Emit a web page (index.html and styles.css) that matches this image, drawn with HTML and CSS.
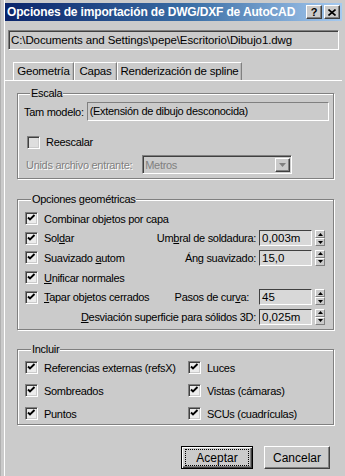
FILE: index.html
```html
<!DOCTYPE HTML>
<html>

<head>
    <meta charset="utf-8">
    <link rel="stylesheet" href="styles.css">
</head>

<body>

<div class="window">
    <div class="titlebar">
        <span class="title">Opciones de importación de DWG/DXF de AutoCAD</span>
        <span class="caption-btns">
            <span class="cbtn help">?</span>
            <span class="cbtn">
                <svg width="8" height="7" viewBox="0 0 8 7"><path d="M0.5 0.5 L7.5 6.5 M7.5 0.5 L0.5 6.5" stroke="#000" stroke-width="1.6"/></svg>
            </span>
        </span>
    </div>

    <div class="client">
        <div class="path">C:\Documents and Settings\pepe\Escritorio\Dibujo1.dwg</div>

        <div class="tabs">
            <span class="tab t1">Geometría</span>
            <span class="tab t2">Capas</span>
            <span class="tab t3">Renderización de spline</span>
        </div>

        <div class="panel">

            <fieldset class="group escala">
                <legend>Escala</legend>
                <div class="row">
                    <span class="lbl">Tam modelo:</span>
                    <span class="static">(Extensión de dibujo desconocida)</span>
                </div>
                <div class="row check-row">
                    <span class="check disabled"></span>
                    <span>Reescalar</span>
                </div>
                <div class="row units">
                    <span class="lbl grey">Unids archivo entrante:</span>
                    <span class="combo">
                        <span class="combo-text">Metros</span>
                        <span class="combo-btn">
                            <svg width="7" height="4" viewBox="0 0 7 4"><path d="M0 0 H7 L3.5 4 Z" fill="#808080"/></svg>
                        </span>
                    </span>
                </div>
            </fieldset>

            <fieldset class="group geom">
                <legend>Opciones geométricas</legend>
                <div class="row">
                    <label class="opt"><span class="check on"></span><span>Combinar objetos por capa</span></label>
                </div>
                <div class="row">
                    <label class="opt"><span class="check on"></span><span>Sol<u>d</u>ar</span></label>
                    <span class="spin-lbl">Um<u>b</u>ral de soldadura:</span>
                    <span class="field">0,003m</span>
                    <span class="spinner"><span class="up"></span><span class="dn"></span></span>
                </div>
                <div class="row">
                    <label class="opt"><span class="check on"></span><span>Suavizado <u>a</u>utom</span></label>
                    <span class="spin-lbl">Án<u>g</u> suavizado:</span>
                    <span class="field">15,0</span>
                    <span class="spinner"><span class="up"></span><span class="dn"></span></span>
                </div>
                <div class="row">
                    <label class="opt"><span class="check on"></span><span><u>U</u>nificar normales</span></label>
                </div>
                <div class="row">
                    <label class="opt"><span class="check on"></span><span><u>T</u>apar objetos cerrados</span></label>
                    <span class="spin-lbl pasos">Pasos de cur<u>v</u>a:</span>
                    <span class="field">45</span>
                    <span class="spinner"><span class="up"></span><span class="dn"></span></span>
                </div>
                <div class="row right">
                    <span class="spin-lbl"><u>D</u>esviación superficie para sólidos 3D:</span>
                    <span class="field">0,025m</span>
                    <span class="spinner"><span class="up"></span><span class="dn"></span></span>
                </div>
            </fieldset>

            <fieldset class="group incluir">
                <legend>Incluir</legend>
                <div class="cols">
                    <label class="opt"><span class="check on"></span><span>Referencias externas (refsX)</span></label>
                    <label class="opt"><span class="check on"></span><span>Luces</span></label>
                    <label class="opt"><span class="check on"></span><span>Sombreados</span></label>
                    <label class="opt"><span class="check on"></span><span>Vistas (cámaras)</span></label>
                    <label class="opt"><span class="check on"></span><span>Puntos</span></label>
                    <label class="opt"><span class="check on"></span><span>SCUs (cuadrículas)</span></label>
                </div>
            </fieldset>

        </div>

        <div class="buttons">
            <span class="btn default"><span class="focus">Aceptar</span></span>
            <span class="btn">Cancelar</span>
        </div>
    </div>
</div>

</body>

</html>
```

FILE: styles.css
```css
/* ventana clásica de windows */

html, body {
    margin: 0;
    padding: 0;
    background: #cbcbcb;
}

body {
    font-family: "Liberation Sans", Arial, sans-serif;
    font-size: 11px;
    letter-spacing: -0.3px;
    color: #000;
}

.window {
    width: 345px;
    height: 476px;
    box-sizing: border-box;
    padding: 3px 3px 0 4px;
    background: #cbcbcb;
    border-left: 1px solid #b0b0b0;
    box-shadow: inset 3px 0 0 #cbcbcb, inset 4px 0 0 #fff;
}

.titlebar {
    height: 18px;
    display: flex;
    align-items: center;
    justify-content: space-between;
    padding: 0 2px 0 2px;
    background: linear-gradient(to right, #0a246a, #3a6ea5 55%, #a6caf0);
}

.title {
    color: #fff;
    font-weight: bold;
    font-size: 12px;
    letter-spacing: -0.15px;
}

.caption-btns {
    display: flex;
    gap: 2px;
}

.cbtn {
    width: 16px;
    height: 14px;
    box-sizing: border-box;
    display: flex;
    align-items: center;
    justify-content: center;
    background: #cbcbcb;
    border: 1px solid;
    border-color: #fff #404040 #404040 #fff;
    box-shadow: inset -1px -1px 0 #808080;
    font-weight: bold;
    font-size: 11px;
    line-height: 12px;
    letter-spacing: 0;
}

.client {
    padding: 9px 0 0 0;
}

.path {
    height: 20px;
    box-sizing: border-box;
    margin: 0 3px 0 3px;
    padding: 0 2px;
    border: 1px solid;
    border-color: #808080 #fff #fff #808080;
    box-shadow: inset 1px 1px 0 #404040;
    line-height: 18px;
    font-size: 11.5px;
    letter-spacing: -0.1px;
}

.tabs {
    display: flex;
    margin: 12px 0 0 8px;
    height: 18px;
}

.tab {
    box-sizing: border-box;
    height: 18px;
    line-height: 16px;
    text-align: center;
    border-top: 1px solid #fff;
    border-left: 1px solid #fff;
    border-right: 1px solid #808080;
    box-shadow: inset -1px 0 0 #b8b8b8;
    font-size: 11.5px;
    letter-spacing: -0.2px;
}

.t1 {
    width: 61px;
}

.t2 {
    width: 43px;
}

.t3 {
    width: 125px;
}

.panel {
    border-top: 1px solid #fff;
    padding: 6px 8px 0 12px;
    height: 357px;
    box-sizing: border-box;
}

.group {
    margin: 0;
    padding: 0 8px 0 7px;
    border: 1px solid #808080;
    box-shadow: 1px 1px 0 #fff, inset 1px 1px 0 #fff;
}

.group legend {
    padding: 0 1px;
    margin-left: 6px;
    line-height: 13px;
    background: #cbcbcb;
}

.row {
    display: flex;
    align-items: center;
    height: 20px;
}

.row.right {
    justify-content: flex-end;
}

.opt {
    display: flex;
    align-items: center;
    flex: 1;
    white-space: nowrap;
}

u {
    text-decoration: underline;
    text-underline-offset: 1px;
}

.check {
    width: 13px;
    height: 13px;
    box-sizing: border-box;
    margin-right: 6px;
    flex: none;
    border: 1px solid;
    border-color: #808080 #fff #fff #808080;
    box-shadow: inset 1px 1px 0 #404040, inset -1px -1px 0 #cbcbcb;
    background: #ececec;
}

.check.on {
    background: #ececec url("data:image/svg+xml,%3Csvg xmlns='http://www.w3.org/2000/svg' width='11' height='11'%3E%3Cpath d='M2 4.5 L4 6.5 L8.5 2' stroke='%23000' stroke-width='1.9' fill='none'/%3E%3C/svg%3E") no-repeat 0 0;
}

.check.disabled {
    background: #dedede;
}

/* escala */

.escala {
    height: 92px;
    box-sizing: border-box;
    padding-left: 6px;
    padding-right: 4px;
}

.escala .row {
    height: 19px;
}

.escala .row:first-of-type {
    margin-top: 2px;
}

.escala .check-row {
    margin-top: 14px;
    padding-left: 3px;
    height: 14px;
}

.escala .lbl {
    margin-right: 3px;
}

.static {
    flex: 1;
    height: 19px;
    box-sizing: border-box;
    border: 1px solid;
    border-color: #808080 #fff #fff #808080;
    line-height: 17px;
    padding-left: 2px;
}

.grey {
    color: #808080;
    text-shadow: 1px 1px 0 #fff;
}

.escala .units {
    margin-top: 6px;
    padding-left: 2px;
}

.units .lbl {
    margin-right: 10px;
}

.combo {
    width: 150px;
    height: 19px;
    box-sizing: border-box;
    display: flex;
    align-items: center;
    justify-content: space-between;
    border: 1px solid;
    border-color: #808080 #fff #fff #808080;
    box-shadow: inset 1px 1px 0 #404040;
    padding: 2px 1px 2px 2px;
    color: #808080;
}

.combo-btn {
    width: 15px;
    height: 14px;
    box-sizing: border-box;
    display: flex;
    align-items: center;
    justify-content: center;
    border: 1px solid;
    border-color: #fff #404040 #404040 #fff;
    box-shadow: inset -1px -1px 0 #808080;
}

/* opciones geometricas */

.geom {
    margin-top: 14px;
    height: 137px;
    box-sizing: border-box;
    padding-top: 3px;
}

.geom .row {
    height: 19.6px;
}

.spin-lbl {
    white-space: nowrap;
    margin-right: 3px;
}

.spin-lbl.pasos {
    margin-right: 10px;
}

.field {
    width: 53px;
    height: 16px;
    box-sizing: border-box;
    border: 1px solid;
    border-color: #404040 #fff #fff #404040;
    background: #d8d8d8;
    line-height: 14px;
    padding-left: 2px;
    font-size: 11.5px;
    letter-spacing: 0;
}

.spinner {
    display: flex;
    flex-direction: column;
    margin-left: 3px;
    width: 10px;
    height: 16px;
}

.spinner span {
    flex: 1;
    box-sizing: border-box;
    border: 1px solid;
    border-color: #fff #808080 #808080 #fff;
    background-repeat: no-repeat;
    background-position: center;
}

.spinner .up {
    background-image: url("data:image/svg+xml,%3Csvg xmlns='http://www.w3.org/2000/svg' width='5' height='3'%3E%3Cpath d='M0 3 H5 L2.5 0 Z' fill='%23000'/%3E%3C/svg%3E");
}

.spinner .dn {
    background-image: url("data:image/svg+xml,%3Csvg xmlns='http://www.w3.org/2000/svg' width='5' height='3'%3E%3Cpath d='M0 0 H5 L2.5 3 Z' fill='%23000'/%3E%3C/svg%3E");
}

/* incluir */

.incluir {
    margin-top: 13px;
    height: 82px;
    box-sizing: border-box;
    padding-top: 0;
}

.cols {
    display: grid;
    grid-template-columns: 163px 1fr;
    grid-auto-rows: 23px;
    align-items: center;
}

/* botones */

.buttons {
    display: flex;
    justify-content: flex-end;
    gap: 11px;
    padding: 9px 12px 0 0;
}

.btn {
    width: 66px;
    height: 23px;
    box-sizing: border-box;
    display: flex;
    align-items: center;
    justify-content: center;
    border: 1px solid;
    border-color: #fff #404040 #404040 #fff;
    box-shadow: inset -1px -1px 0 #808080;
    font-size: 12px;
    letter-spacing: 0;
}

.btn.default {
    width: 72px;
    border: 1px solid #000;
    box-shadow: inset 1px 1px 0 #fff, inset -1px -1px 0 #404040, inset -2px -2px 0 #808080;
}

.focus {
    display: flex;
    align-items: center;
    justify-content: center;
    width: 62px;
    height: 15px;
    border: 1px dotted #000;
}
```
